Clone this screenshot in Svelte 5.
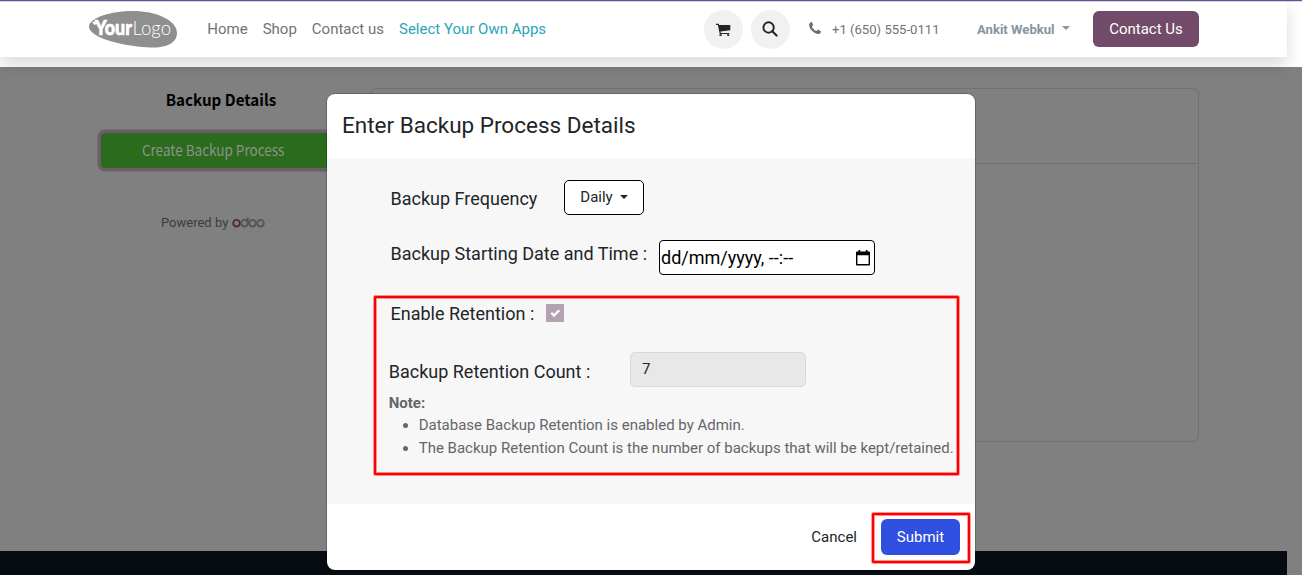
<script>
  const links = ['Home', 'Shop', 'Contact us'];
  const notes = [
    'Database Backup Retention is enabled by Admin.',
    'The Backup Retention Count is the number of backups that will be kept/retained.'
  ];
</script>

<div class="page">
  <header>
    <svg class="logo" width="90" height="40" viewBox="0 0 90 40">
      <path d="M1 18C2 10 22 3 45 3C68 3 89 12 89 25C89 33 82 40 63 39.5C42 39 0 31 1 18Z" fill="#8f8f8f" />
      <path d="M4 14l5.500-1 1 2-4 2z" fill="#fff" />
      <text x="7" y="27" class="your" textLength="37" lengthAdjust="spacingAndGlyphs">Your</text>
      <text x="44.500" y="27" class="logo-light" textLength="38.500" lengthAdjust="spacingAndGlyphs">Logo</text>
    </svg>
    <nav>
      {#each links as link}<a href="#top">{link}</a>{/each}
      <a href="#top" class="accent">Select Your Own Apps</a>
    </nav>
    <div class="round cart">
      <svg width="15" height="14" viewBox="0 0 15 14"><path d="M0 .8h2.8l.4 1.2H14.3v5.3L4.5 8.6l.4 1.3h8.3v1.2H3.7L1.9 2H0zM3.500 11.200h2.200v1.800H3.500zM11.200 11.200h2v1.800h-2z" fill="#212529" /></svg>
    </div>
    <div class="round">
      <svg class="search" width="16" height="16" viewBox="0 0 16 16"><circle cx="6.600" cy="6.500" r="5.200" fill="none" stroke="#212529" stroke-width="1.900" /><path d="M10.300 10.300L14.600 14.600" stroke="#212529" stroke-width="2.100" stroke-linecap="round" /></svg>
    </div>
    <svg class="phone" width="12" height="12" viewBox="0 0 12 12"><path d="M.1 2.7C.1 1.3 1.5.3 2.7 0c.7.4 1.2 2.3 1.4 3 .1.8-1.2 1.1-1.2 1.8C3.5 6.400 5.6 8.500 7.200 9c.8 0 1.100-1.300 1.900-1.200.7.200 2.500 1.200 2.900 1.700 0 1.300-1.200 2.400-2.500 2.400C4.700 11.700.2 6.900.1 2.700Z" fill="#6c6e70" /></svg>
    <span class="tel">+1 (650) 555-0111</span>
    <span class="user">Ankit Webkul</span><i class="caret user-caret"></i>
    <button class="contact">Contact Us</button>
  </header>

  <main>
    <aside>
      <h4>Backup Details</h4>
      <button class="create"><span>Create Backup Process</span></button>
      <p>Powered by
        <svg width="33" height="11" viewBox="0 0 33 11" fill="none" stroke-width="1.900">
          <circle cx="4.500" cy="6.200" r="3.300" stroke="#4b2c43" /><circle cx="12.500" cy="6.200" r="3.300" stroke="#555" />
          <path d="M15.800.5v6" stroke="#555" /><circle cx="20.500" cy="6.200" r="3.300" stroke="#555" /><circle cx="28.500" cy="6.200" r="3.300" stroke="#555" />
        </svg>
      </p>
    </aside>
    <section><div></div></section>
  </main>
  <footer></footer>

  <div class="modal">
    <div class="head">Enter Backup Process Details</div>
    <div class="body">
      <div class="row freq"><label for="freq">Backup Frequency</label><button id="freq" class="daily">Daily<i class="caret"></i></button></div>
      <div class="row start"><span>Backup Starting Date and Time :</span>
        <div class="date"><span>dd/mm/yyyy, --:--</span>
          <svg width="14" height="16" viewBox="0 0 14 16"><path d="M2.500 0h1.700v1.500h5.600V0h1.700v1.500H13q1 0 1 1V14.500q0 1-1 1H1q-1 0-1-1V2.500q0-1 1-1H2.500zM1.400 5.300v8.800h11.200V5.300z" fill="#000" fill-rule="evenodd" /></svg>
        </div>
      </div>
      <div class="row enable"><span>Enable Retention :</span>
        <div class="check"><svg width="18" height="18" viewBox="0 0 18 18"><path d="M5.300 8.800L8 11.600 13.300 6.300" fill="none" stroke="#fff" stroke-width="2.300" /></svg></div>
      </div>
      <div class="row count"><span>Backup Retention Count :</span><div class="number">7</div></div>
      <div class="note"><b>Note:</b>
        <ul>{#each notes as note}<li>{note}</li>{/each}</ul>
      </div>
    </div>
    <div class="foot"><button class="cancel">Cancel</button><button class="submit">Submit</button></div>
    <div class="mark retention"></div>
    <div class="mark action"></div>
  </div>
</div>

<style>
  :global(body) { margin: 0; overflow: hidden; }
  * { box-sizing: border-box; }
  button { border: 0; padding: 0; font-family: inherit; }
  .page { position: relative; width: 1302px; height: 575px; background: linear-gradient(#62548f 1px, #d9d5e8 1px, #d9d5e8 2px, #fff 2px, #fff 67px, #808080 67px); font-family: Roboto, sans-serif; font-size: 15px; color: #212529; overflow: hidden; display: flex; flex-direction: column; }
  header { width: 1287px; height: 57px; flex: none; background: linear-gradient(#62548f 1px, #d9d5e8 1px, #d9d5e8 2px, #fff 2px); display: flex; align-items: center; padding: 1px 0 0 88px; box-shadow: 0 8px 16px rgba(0, 0, 0, .15); white-space: nowrap; }
  .logo { flex: none; margin-top: -2px; }
  .your { font: 900 20px Lato, sans-serif; fill: #fff; stroke: #fff; stroke-width: .6px; }
  .logo-light { font: 300 20px Lato, sans-serif; fill: #fff; }
  nav { display: flex; gap: 15px; margin-left: 29.300px; width: 496.700px; }
  nav a { color: #737373; text-decoration: none; }
  nav a.accent { color: #2aa5b7; }
  .round { width: 39px; height: 39px; flex: none; border-radius: 50%; background: #f1f1f1; display: flex; align-items: center; justify-content: center; margin-right: 8px; margin-top: 1px; }
  .search { margin-top: -2px; }
  .phone { flex: none; margin-left: 11px; margin-top: -2px; }
  .tel { width: 145px; margin-left: 11px; font-size: 13.100px; color: #737373; margin-top: 1px; }
  .user { font-size: 13.100px; font-weight: 700; color: #8595a2; width: 78px; margin-top: 1px; }
  .caret { border: 4px solid transparent; border-top-color: currentColor; border-bottom: 0; }
  .user-caret { color: #8595a2; margin: -2px 23px 0 7px; }
  .contact { width: 106px; height: 36px; border-radius: 6px; background: #714b67; color: #fff; font-size: 15px; }
  main { display: flex; height: 494px; flex: none; }
  aside { width: 370px; padding: 31px 0 0 97px; display: flex; flex-direction: column; }
  h4 { width: 248px; margin: 0; text-align: center; font: 700 16px/22px "Noto Sans CJK SC", sans-serif; color: #000; transform: scaleX(.948); }
  .create { width: 230px; height: 35px; margin: 23px 0 0 4px; border-radius: 4px; background: #2a6b1c; color: #8d928c; font: 15px "Noto Sans CJK SC", sans-serif; box-shadow: 0 0 0 3.500px #6d5d6a; padding: 0 5px 2px 0; }
  .create span { display: inline-block; transform: scaleX(.9); }
  p { margin: 46px 0 0 64px; font-size: 13px; line-height: 17px; color: #3c3c3c; display: flex; gap: 4px; }
  p svg { margin-top: 3px; }
  section { width: 829px; height: 354px; margin-top: 31px; border: 1px solid #717171; border-radius: 6px; }
  section div { height: 75px; border-bottom: 1px solid #717171; }
  footer { width: 1287px; height: 24px; background: #070b12; }
  .modal { position: absolute; left: 327px; top: 94px; width: 648px; height: 476px; border-radius: 8px; background: #fff; display: flex; flex-direction: column; box-shadow: 0 0 0 1px #0003; }
  .head { height: 64px; padding: 16px 15px; font-size: 22.500px; line-height: 30px; }
  .body { height: 346px; background: #f7f7f7; padding: 22px 0 0 62px; }
  .row { display: flex; font-size: 18px; line-height: 27px; height: 35px; white-space: nowrap; padding-left: 1.500px; }
  .freq { align-items: center; }
  .freq label { width: 173.500px; padding-top: 1px; }
  .daily { width: 80px; height: 35px; border: 1px solid #000; border-radius: 5px; background: #fff; font-size: 15px; color: #212529; display: flex; align-items: center; justify-content: center; gap: 7px; padding-bottom: 1px; }
  .start { margin-top: 25px; }
  .start > span { width: 268.500px; }
  .date { width: 216px; height: 35px; border: 1px solid #000; border-radius: 4px; background: #fff; color: #000; display: flex; align-items: center; justify-content: space-between; padding: 0 4px 0 1px; }
  .enable { margin-top: 25px; }
  .enable > span { width: 155.500px; }
  .check { width: 18px; height: 18px; background: #b5a2b1; margin-top: 4px; }
  .check svg { display: block; }
  .count { margin-top: 17px; padding-left: 0; }
  .count > span { width: 241px; padding-top: 6px; margin-left: -.3px; margin-right: .3px; }
  .number { width: 176px; height: 35px; border: 1px solid #d8d8d8; border-radius: 5px; background: #e8e8e8; font-size: 15px; line-height: 32px; padding-left: 11px; }
  .note { color: #646669; line-height: 23px; margin: 5px 0 0 -.3px; white-space: nowrap; }
  .note b { display: block; line-height: 22px; }
  ul { margin: 0; padding-left: 30px; }
  .foot { height: 66px; display: flex; align-items: center; justify-content: flex-end; padding: 0 15px 0 0; gap: 24px; }
  .cancel { background: none; font-size: 15px; color: #212529; }
  .submit { width: 79px; height: 36px; border-radius: 6px; background: #2f4fe0; color: #fff; font-size: 15px; }
  .mark { position: absolute; border: 2.500px solid #f00; border-width: 2px; box-shadow: 0 0 0 .7px #ff000090, inset 0 0 0 .7px #ff000090; border-radius: 1px; }
  .retention { left: 47px; top: 202px; width: 585px; height: 179px; }
  .action { left: 545px; top: 419px; width: 98px; height: 50px; }
</style>
